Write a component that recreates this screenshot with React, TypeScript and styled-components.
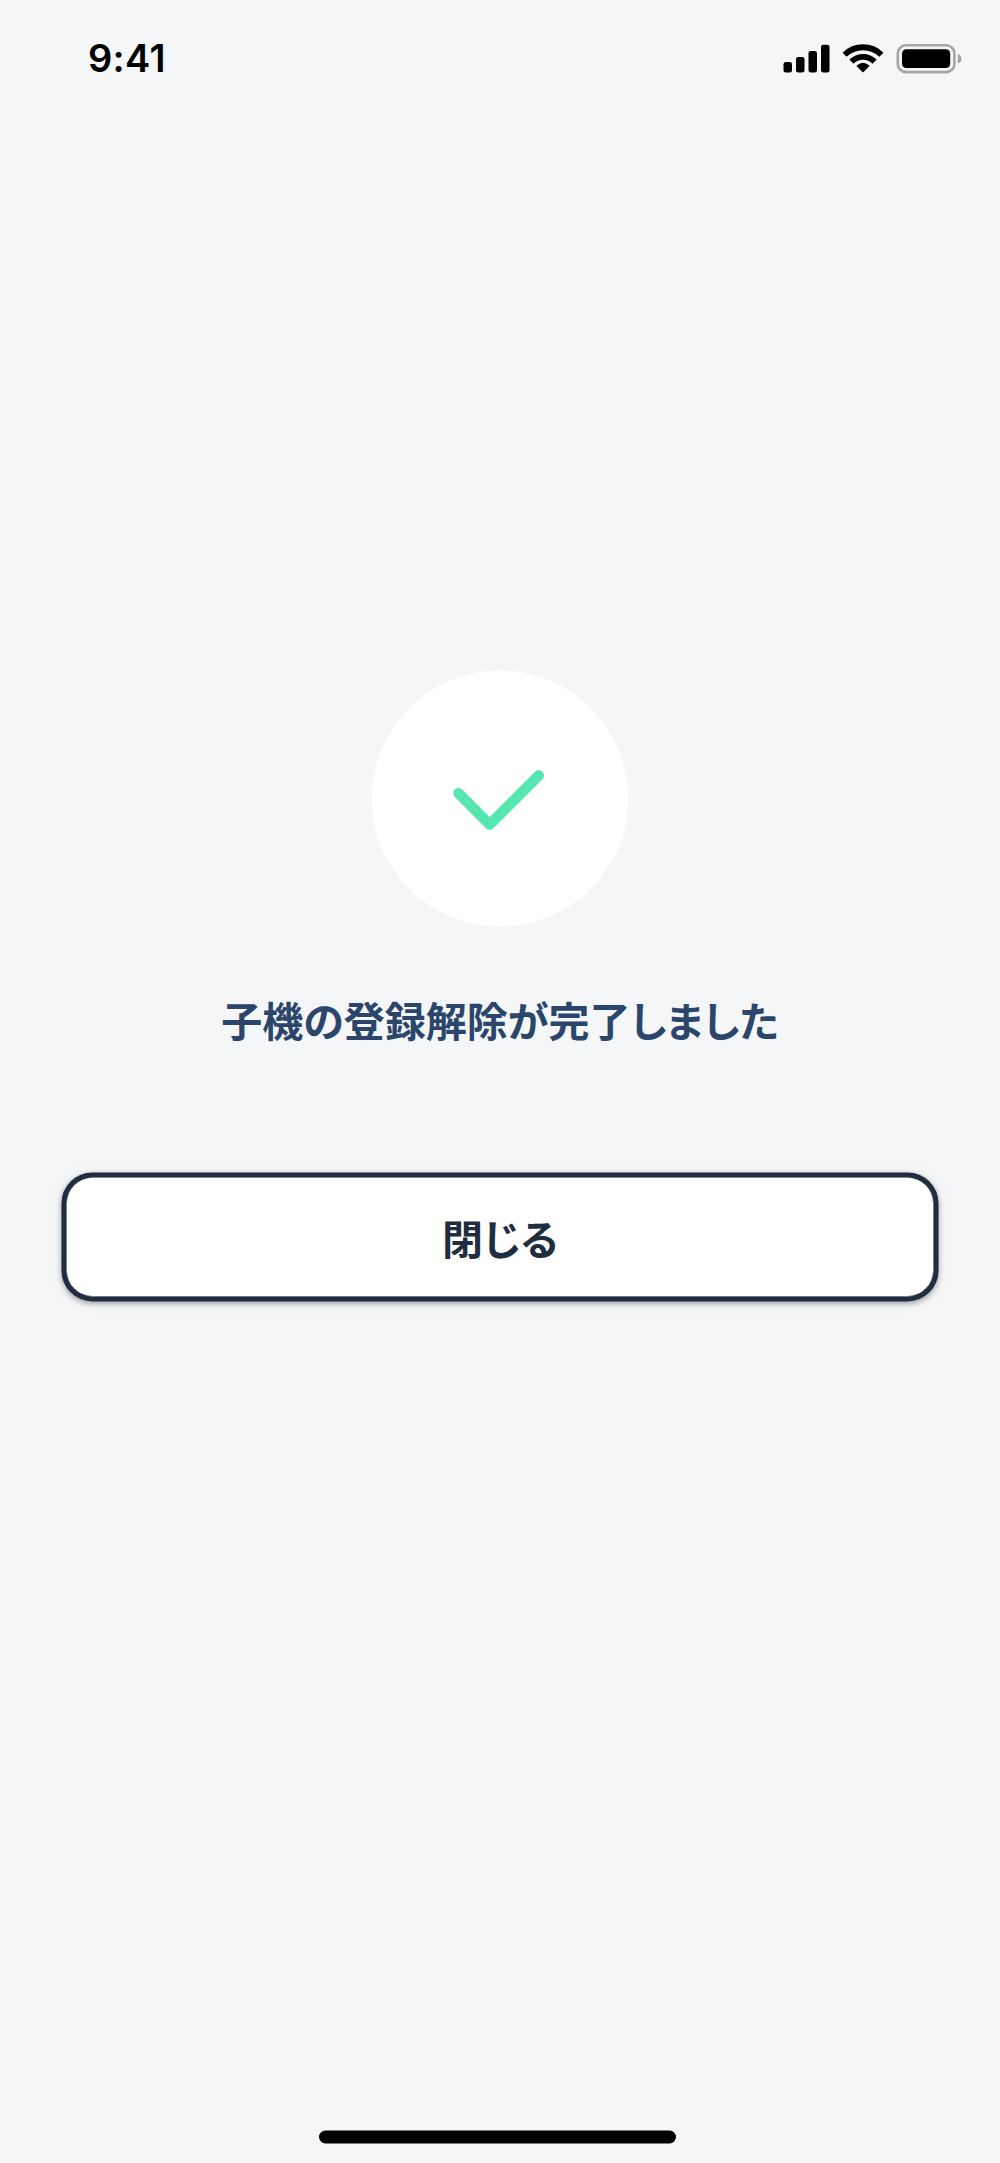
import React from "react";
import styled, { createGlobalStyle } from "styled-components";

const GlobalStyle = createGlobalStyle`
  *, *::before, *::after { box-sizing: border-box; }
  html, body { margin: 0; background: #f4f6f8; }
`;

const Screen = styled.main`
  display: flex;
  flex-direction: column;
  width: 1000px;
  height: 2163px;
  overflow: hidden;
  background: #f4f6f8;
  font-family: "Noto Sans CJK JP", sans-serif;
`;

const StatusBar = styled.header`
  display: flex;
  justify-content: space-between;
  height: 120px;
  flex: none;
  padding: 36px 38px 0 88px;
`;

const Time = styled.time`
  height: 44px;
  line-height: 44px;
  font-family: Inter, sans-serif;
  font-size: 38px;
  font-weight: 600;
  letter-spacing: 0.3px;
  color: #000;
`;

const StatusIcons = styled.svg`
  display: block;
  width: 182px;
  height: 44px;
`;

const Content = styled.section`
  display: flex;
  flex: 1;
  flex-direction: column;
  align-items: center;
  padding: 550px 61px 0;
`;

const Badge = styled.div`
  width: 258px;
  height: 257px;
  flex: none;
`;

const Message = styled.h1`
  margin: 61px 0 0;
  height: 62px;
  line-height: 62px;
  font-size: 41px;
  font-weight: 700;
  font-feature-settings: "palt";
  white-space: nowrap;
  color: #2c466b;
`;

const CloseButton = styled.button`
  width: 877px;
  height: 129px;
  margin: 122px 0 0;
  padding: 0 0 0 1px;
  border: 5px solid #202d40;
  border-radius: 31px;
  background: #fff;
  box-shadow: inset 0 0 0 0.4px #202d40, 0 2.5px 5px rgba(0, 0, 0, 0.3), 0 0 20px rgba(0, 0, 0, 0.04);
  transform: translate(-0.5px, 0.4px);
  font-family: inherit;
  font-size: 41px;
  font-weight: 700;
  line-height: 62px;
  font-feature-settings: "palt";
  color: #202d40;
`;

const Footer = styled.footer`
  display: flex;
  flex: none;
  height: 33px;
  padding-left: 319px;
`;

const HomeIndicator = styled.div`
  width: 357px;
  height: 13px;
  border-radius: 7px;
  background: #000;
  transform: translateY(0.5px);
`;

export default function App() {
  return (
    <>
      <GlobalStyle />
      <Screen>
        <StatusBar>
          <Time>9:41</Time>
          <StatusIcons viewBox="780 36 182 44" aria-hidden="true">
            <rect x="783.5" y="62" width="8.5" height="10.6" rx="2.3" />
            <rect x="796" y="57" width="8.5" height="15.6" rx="2.3" />
            <rect x="808.5" y="51" width="8.5" height="21.6" rx="2.3" />
            <rect x="821" y="44.8" width="8.5" height="27.8" rx="2.3" />
            <g fill="none" stroke="#000" strokeWidth="5.8">
              <path d="M844.6 54.8A26.2 26.2 0 0 1 881.4 54.8" />
              <path d="M851.4 61.6A16.5 16.5 0 0 1 874.6 61.6" />
            </g>
            <path d="M857 66.6Q856.3 66 857 65.3Q863 60.2 869 65.3Q869.7 66 869 66.6L863.6 72Q863 72.6 862.4 72Z" />
            <rect x="897.8" y="45.3" width="56.6" height="26.8" rx="8.2" fill="none" stroke="#a4a5a7" strokeWidth="2.6" />
            <rect x="902" y="49.3" width="48.2" height="18.8" rx="4.3" />
            <path d="M957.8 53.8Q961.5 55.6 961.5 58.7T957.8 63.6Z" fill="#a4a5a7" />
          </StatusIcons>
        </StatusBar>
        <Content>
          <Badge>
            <svg width="258" height="257" viewBox="371 670 258 257" display="block" aria-hidden="true">
              <circle cx="500" cy="798.4" r="128.2" fill="#fff" />
              <path d="M458.5 793.3L489.7 824.6L538.7 775.4" fill="none" stroke="#57e6b1" strokeWidth="10.6" strokeLinecap="round" strokeLinejoin="round" />
            </svg>
          </Badge>
          <Message>子機の登録解除が完了しました</Message>
          <CloseButton type="button">閉じる</CloseButton>
        </Content>
        <Footer>
          <HomeIndicator />
        </Footer>
      </Screen>
    </>
  );
}
